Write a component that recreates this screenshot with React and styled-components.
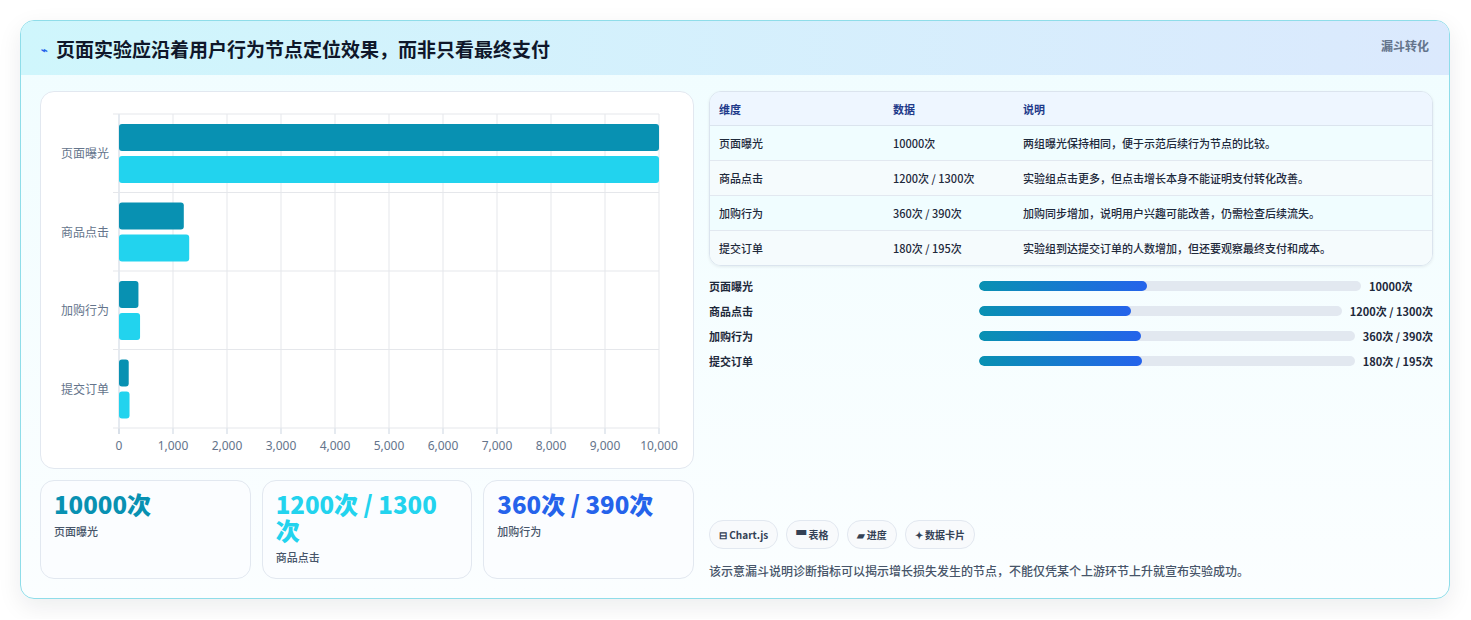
import React from "react";
import styled, { createGlobalStyle } from "styled-components";

const G = createGlobalStyle`
  body{margin:0;background:#fff;font-family:"Noto Sans CJK SC","Noto Sans",sans-serif;}
`;
const Page = styled.div`padding:20px 20px 20px 20px;`;
const Card = styled.div`
  width:1430px;height:579px;box-sizing:border-box;border:1px solid #8fdde9;border-radius:14px;overflow:hidden;
  background:linear-gradient(180deg,#f0fdff,#fbfeff);box-shadow:0 8px 24px rgba(15,23,42,.08);display:flex;flex-direction:column;`;
const Header = styled.div`
  height:56px;display:flex;align-items:flex-start;justify-content:space-between;padding:0 20px;
  background:linear-gradient(90deg,#cff6fc,#dbe9fd);`;
const Title = styled.h1`margin:14px 0 0;font-size:19px;font-weight:700;color:#0f172a;display:flex;align-items:center;gap:8px;`;
const Tag = styled.span`margin-top:16px;font-size:12px;font-weight:700;color:#64748b;`;
const Body = styled.div`display:grid;grid-template-columns:654px 724px;gap:15px;padding:16px 19px 19px;flex:1;`;
const Col = styled.div`display:flex;flex-direction:column;gap:11px;`;
const ChartBox = styled.div`height:378px;box-sizing:border-box;border:1px solid #e2e8f0;border-radius:14px;background:#fff;`;
const Stats = styled.div`display:grid;grid-template-columns:repeat(3,1fr);gap:11px;`;
const Stat = styled.div`height:99px;box-sizing:border-box;border:1px solid #e2e8f0;border-radius:14px;background:#fbfdff;padding:10px 13px;`;
const StatV = styled.div`font-size:24px;font-weight:800;line-height:26px;color:${p=>p.c};`;
const StatL = styled.div`font-size:11px;color:#475569;margin-top:6px;font-weight:500;`;
const Right = styled.div`display:flex;flex-direction:column;`;
const Table = styled.table`width:100%;border-collapse:separate;border-spacing:0;border:1px solid #dbe4ee;border-radius:12px;overflow:hidden;font-size:11px;box-shadow:0 1px 3px rgba(15,23,42,.08);`;
const Th = styled.th`text-align:left;font-weight:700;color:#1e3a8a;background:#eef6ff;height:33px;padding:0 9px;border-bottom:1px solid #dbe4ee;`;
const Td = styled.td`height:34px;padding:0 9px;color:#1e293b;font-weight:500;background:${p=>p.alt?"#f5fbfd":"#f0fdff"};border-top:${p=>p.first?"none":"1px solid #e2e8f0"};`;
const Bars = styled.div`display:flex;flex-direction:column;gap:8px;margin-top:11px;`;
const BarRow = styled.div`display:grid;grid-template-columns:auto 1fr auto;align-items:center;gap:8px;font-size:11px;font-weight:600;color:#1e293b;height:17px;`;
const BarLabel = styled.span`width:262px;`;
const Track = styled.div`height:10px;border-radius:5px;background:#e2e8f0;overflow:hidden;`;
const Fill = styled.div`height:100%;border-radius:5px;background:linear-gradient(90deg,#0891b2,#2563eb);`;
const Chips = styled.div`display:flex;gap:8px;margin-top:auto;`;
const Chip = styled.span`height:27px;padding:0 9px;display:inline-flex;align-items:center;gap:4px;border:1px solid #e2e8f0;border-radius:14px;background:#f8fafc;font-size:10px;font-weight:700;color:#334155;`;
const Note = styled.p`margin:13px 0 0;font-size:12px;color:#475569;font-weight:500;`;

const cats=["页面曝光","商品点击","加购行为","提交订单"];
const A=[10000,1200,360,180],B=[10000,1300,390,195];
function Chart(){
  const x0=78,w=540,y0=22,rh=78.5;
  const sx=v=>x0+v/10000*w;
  return <svg width="654" height="378" style={{display:"block"}}>
    {Array.from({length:11},(_,i)=><g key={i}>
      <line x1={sx(i*1000)} x2={sx(i*1000)} y1={y0} y2={y0+rh*4+(i===0?6:0)} stroke={i===0?"#cbd5e1":"#e5e7eb"}/>
      <line x1={sx(i*1000)} x2={sx(i*1000)} y1={y0+rh*4} y2={y0+rh*4+6} stroke="#cbd5e1"/>
      <text x={sx(i*1000)} y={y0+rh*4+22} fontSize="12" fill="#64748b" textAnchor="middle" fontFamily="Noto Sans">{(i*1000).toLocaleString("en-US")}</text>
    </g>)}
    {Array.from({length:5},(_,i)=><line key={i} x1={x0-6} x2={x0+w} y1={y0+i*rh} y2={y0+i*rh} stroke="#e5e7eb"/>)}
    {cats.map((c,i)=><g key={c}>
      <text x={x0-10} y={y0+i*rh+rh/2+5} fontSize="12" fill="#64748b" textAnchor="end">{c}</text>
      <rect x={x0} y={y0+i*rh+10} width={sx(A[i])-x0} height={27} rx="3" fill="#0891b2"/>
      <rect x={x0} y={y0+i*rh+42} width={sx(B[i])-x0} height={27} rx="3" fill="#22d3ee"/>
    </g>)}
  </svg>;
}
const rows=[["页面曝光","10000次","两组曝光保持相同，便于示范后续行为节点的比较。"],["商品点击","1200次 / 1300次","实验组点击更多，但点击增长本身不能证明支付转化改善。"],["加购行为","360次 / 390次","加购同步增加，说明用户兴趣可能改善，仍需检查后续流失。"],["提交订单","180次 / 195次","实验组到达提交订单的人数增加，但还要观察最终支付和成本。"]];
export default function App(){
  return <Page><G/><Card>
    <Header><Title><span style={{fontSize:11,color:"#2563eb"}}>⌁</span>页面实验应沿着用户行为节点定位效果，而非只看最终支付</Title><Tag>漏斗转化</Tag></Header>
    <Body>
      <Col>
        <ChartBox><Chart/></ChartBox>
        <Stats>
          <Stat><StatV c="#0891b2">10000次</StatV><StatL>页面曝光</StatL></Stat>
          <Stat><StatV c="#22d3ee">1200次 / 1300次</StatV><StatL>商品点击</StatL></Stat>
          <Stat><StatV c="#2563eb">360次 / 390次</StatV><StatL>加购行为</StatL></Stat>
        </Stats>
      </Col>
      <Right>
        <Table><thead><tr><Th style={{width:156}}>维度</Th><Th style={{width:112}}>数据</Th><Th>说明</Th></tr></thead>
          <tbody>{rows.map((r,i)=><tr key={i}>{r.map((c,j)=><Td key={j} first={i===0} alt={i%2===1}>{c}</Td>)}</tr>)}</tbody></Table>
        <Bars>{rows.map((r,i)=><BarRow key={i}><BarLabel>{r[0]}</BarLabel><Track><Fill style={{width:["44%","42%","43%","43.5%"][i]}}/></Track><span style={{fontWeight:r[1]==="10000次"?600:700,width:r[1]==="10000次"?64:"auto"}}>{r[1]}</span></BarRow>)}</Bars>
        <Chips><Chip>⊟ Chart.js</Chip><Chip>▀ 表格</Chip><Chip>▰ 进度</Chip><Chip>✦ 数据卡片</Chip></Chips>
        <Note>该示意漏斗说明诊断指标可以揭示增长损失发生的节点，不能仅凭某个上游环节上升就宣布实验成功。</Note>
      </Right>
    </Body>
  </Card></Page>;
}
